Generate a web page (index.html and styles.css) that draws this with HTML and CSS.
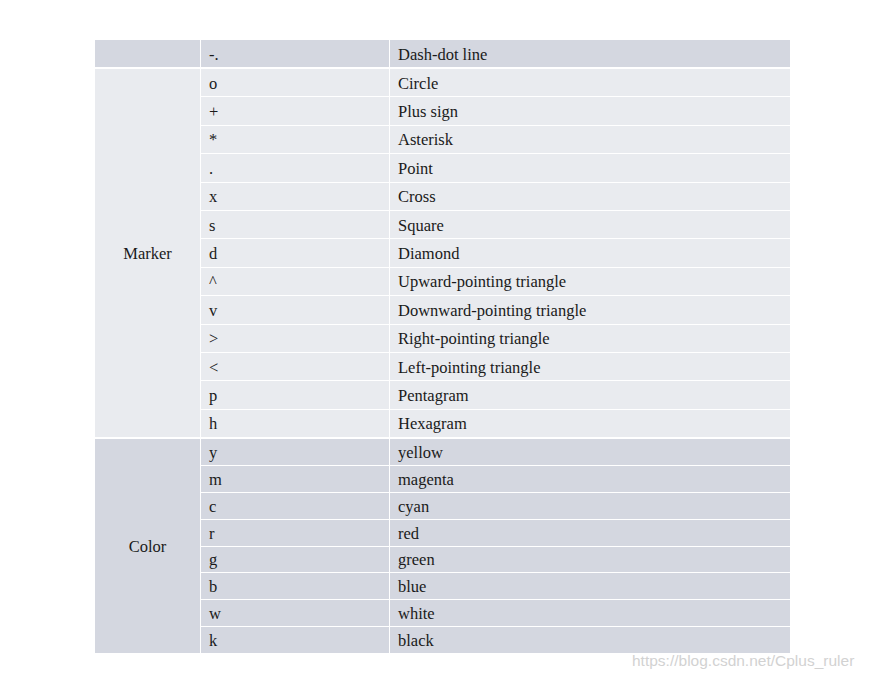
FILE: index.html
```html
<!DOCTYPE html>
<html>
<head>
<meta charset="utf-8">
<link rel="stylesheet" href="styles.css">
</head>
<body>
<div class="page">
  <div class="table">
    <div class="group dark head">
      <div class="label"></div>
      <div class="rows">
        <div class="row"><div class="cell">-.</div><div class="cell">Dash-dot line</div></div>
      </div>
    </div>
    <div class="group light marker">
      <div class="label">Marker</div>
      <div class="rows">
        <div class="row"><div class="cell">o</div><div class="cell">Circle</div></div>
        <div class="row"><div class="cell">+</div><div class="cell">Plus sign</div></div>
        <div class="row"><div class="cell">*</div><div class="cell">Asterisk</div></div>
        <div class="row"><div class="cell">.</div><div class="cell">Point</div></div>
        <div class="row"><div class="cell">x</div><div class="cell">Cross</div></div>
        <div class="row"><div class="cell">s</div><div class="cell">Square</div></div>
        <div class="row"><div class="cell">d</div><div class="cell">Diamond</div></div>
        <div class="row"><div class="cell">^</div><div class="cell">Upward-pointing triangle</div></div>
        <div class="row"><div class="cell">v</div><div class="cell">Downward-pointing triangle</div></div>
        <div class="row"><div class="cell">&gt;</div><div class="cell">Right-pointing triangle</div></div>
        <div class="row"><div class="cell">&lt;</div><div class="cell">Left-pointing triangle</div></div>
        <div class="row"><div class="cell">p</div><div class="cell">Pentagram</div></div>
        <div class="row"><div class="cell">h</div><div class="cell">Hexagram</div></div>
      </div>
    </div>
    <div class="group dark color">
      <div class="label">Color</div>
      <div class="rows">
        <div class="row"><div class="cell">y</div><div class="cell">yellow</div></div>
        <div class="row"><div class="cell">m</div><div class="cell">magenta</div></div>
        <div class="row"><div class="cell">c</div><div class="cell">cyan</div></div>
        <div class="row"><div class="cell">r</div><div class="cell">red</div></div>
        <div class="row"><div class="cell">g</div><div class="cell">green</div></div>
        <div class="row"><div class="cell">b</div><div class="cell">blue</div></div>
        <div class="row"><div class="cell">w</div><div class="cell">white</div></div>
        <div class="row"><div class="cell">k</div><div class="cell">black</div></div>
      </div>
    </div>
  </div>
  <div class="watermark">https://blog.csdn.net/Cplus_ruler</div>
</div>
</body>
</html>
```
FILE: styles.css
```css
html, body {
  margin: 0;
  padding: 0;
  background: #ffffff;
}
.page {
  position: relative;
  width: 869px;
  height: 678px;
  overflow: hidden;
  padding: 40px 0 0 95px;
  box-sizing: border-box;
}
.table {
  width: 695px;
  display: flex;
  flex-direction: column;
  gap: 2px;
  background: #ffffff;
  font-family: "Liberation Serif", "Times New Roman", serif;
  font-size: 16.5px;
  color: #1a1a1a;
}
.group {
  display: grid;
  grid-template-columns: 105px 1fr;
  column-gap: 1px;
}
.head { height: 27px; }
.marker { height: 368px; }
.color { height: 214px; }
.label {
  display: flex;
  align-items: center;
  justify-content: center;
  padding-top: 2px;
}
.rows {
  display: flex;
  flex-direction: column;
  gap: 1px;
}
.row {
  flex: 1;
  display: grid;
  grid-template-columns: 188px 1fr;
  column-gap: 1px;
}
.cell {
  display: flex;
  align-items: center;
  padding: 2px 0 0 8px;
}
.dark .label, .dark .cell { background: #d4d7e0; }
.light .label, .light .cell { background: #e9ebef; }
.watermark {
  position: absolute;
  left: 632px;
  top: 652px;
  font-family: "Liberation Sans", Arial, sans-serif;
  font-size: 15.5px;
  color: #d2d2d2;
  text-shadow: 0 0 1px #ffffff;
  white-space: nowrap;
}
```
